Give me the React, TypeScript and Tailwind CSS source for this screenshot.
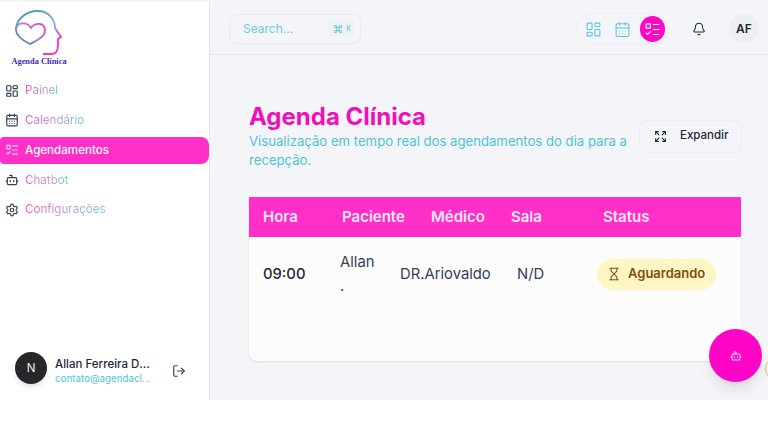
import { Bell, Bot, CalendarDays, Expand, Hourglass, LayoutDashboard, ListTodo, LogOut, Settings } from "lucide-react";
import type { LucideIcon } from "lucide-react";

type NavItem = { label: string; icon: LucideIcon; active?: boolean };

const navItems: NavItem[] = [
  { label: "Painel", icon: LayoutDashboard },
  { label: "Calendário", icon: CalendarDays },
  { label: "Agendamentos", icon: ListTodo, active: true },
  { label: "Chatbot", icon: Bot },
  { label: "Configurações", icon: Settings },
];

function Logo() {
  return (
    <div className="flex w-[56px] flex-col items-center">
      <svg width="50" height="47" viewBox="0 0 50 47" fill="none">
        <defs>
          <linearGradient id="head" x1="0" y1="0" x2="1" y2="1">
            <stop offset="0" stopColor="#2b8fa8" />
            <stop offset="0.55" stopColor="#7fb5d8" />
            <stop offset="0.8" stopColor="#ff2fc8" />
          </linearGradient>
          <linearGradient id="heart" x1="0" y1="1" x2="1" y2="0">
            <stop offset="0" stopColor="#1f7f99" />
            <stop offset="0.5" stopColor="#a58fd0" />
            <stop offset="1" stopColor="#ff2fc8" />
          </linearGradient>
        </defs>
        <path
          d="M2 21C2 10 12 2 24 2c10 0 17 8 17 17l6 9-3 2v6c0 6-2 9-6 9h-9"
          stroke="url(#head)"
          strokeWidth="1.800"
        />
        <path
          d="M17 19c3-5 14-7 14 3 0 6-9 10-15 13C8 31 2 27 2 21c0-8 11-9 15-2Z"
          stroke="url(#heart)"
          strokeWidth="1.800"
        />
      </svg>
      <span className="mt-[1px] whitespace-nowrap font-['Liberation_Serif',serif] text-[8.400px] leading-[10px] font-bold text-[#4a1fb8]">
        Agenda Clínica
      </span>
    </div>
  );
}

function Sidebar() {
  return (
    <aside className="flex h-full w-[210px] shrink-0 flex-col border-r border-[#e5e7eb] bg-white">
      <div className="h-[75px] pt-[7px] pl-[11px]">
        <Logo />
      </div>
      <nav className="flex flex-col gap-[2.750px]">
        {navItems.map((item) => {
          const Icon = item.icon;
          return (
            <div
              key={item.label}
              className={
                item.active
                  ? "flex h-[27px] w-[209px] items-center gap-[6px] rounded-r-lg rounded-l-sm bg-[#ff2fc8] pl-[5px] text-[#fbd5f1]"
                  : "flex h-[27px] items-center gap-[6px] pl-[5px] text-[#344054]"
              }
            >
              <Icon size={14} strokeWidth={2} />
              <span
                className={
                  item.active
                    ? "pt-[1px] text-[11.600px] font-medium text-white"
                    : "bg-gradient-to-r from-[#ec4fc4] to-[#6cc8e0] bg-clip-text pt-[1px] text-[11.600px] text-transparent"
                }
              >
                {item.label}
              </span>
            </div>
          );
        })}
      </nav>
      <div className="mt-auto flex items-start pb-[14px] pl-[15px]">
        <div className="flex h-[32px] w-[32px] shrink-0 items-center justify-center rounded-full bg-[#27272a] font-['Liberation_Sans',sans-serif] text-[12px] text-white shadow-md">
          N
        </div>
        <div className="mt-[4px] ml-[8px] w-[96px]">
          <p className="truncate text-[11.500px] leading-[16px] font-medium text-[#1d2939]">Allan Ferreira Dias</p>
          <p className="truncate text-[9.800px] leading-[14px] text-[#4fc3dc]">contato@agendaclinica.com</p>
        </div>
        <LogOut size={14} className="mt-[12px] ml-[21px] shrink-0 text-[#344054]" />
      </div>
    </aside>
  );
}

function Header() {
  return (
    <header className="flex h-[53px] shrink-0 items-center justify-between border-b border-[#e5e7eb] pt-[2px] pr-[9px] pl-[19px]">
      <div className="flex h-[30px] w-[132px] items-center justify-between rounded-lg border border-[#e9ebef] bg-[#f3f5f8] pr-[5px] pl-[13px]">
        <span className="text-[12px] text-[#76c9de]">Search...</span>
        <span className="flex items-center gap-[3px] rounded bg-[#eef1f5] px-[4px] py-[1px] text-[#5cc6de]">
          <span className="text-[11px] leading-[14px]">⌘</span>
          <span className="text-[7px] leading-[14px]">K</span>
        </span>
      </div>
      <div className="flex items-center">
        <div className="flex h-[32px] w-[93px] items-center gap-[2px] rounded-full border border-[#eceef2] pr-[3px] pl-[2px]">
          <span className="flex w-[30px] justify-center text-[#5cc6de]">
            <LayoutDashboard size={17} strokeWidth={1.5} />
          </span>
          <span className="flex w-[26px] justify-center text-[#5cc6de]">
            <CalendarDays size={17} strokeWidth={1.5} />
          </span>
          <span className="ml-[3px] flex h-[26px] w-[26px] items-center justify-center rounded-full bg-[#ff05c5] text-white">
            <ListTodo size={17} strokeWidth={1.6} />
          </span>
        </div>
        <Bell size={14} strokeWidth={1.8} className="ml-[23px] text-[#1d2939]" />
        <div className="ml-[23px] flex h-[30px] w-[30px] items-center justify-center rounded-full bg-[#eeeff2] text-[12px] font-semibold text-[#1d2939]">
          AF
        </div>
      </div>
    </header>
  );
}

function AppointmentsTable() {
  return (
    <div className="h-[164px] w-[492px] overflow-hidden rounded-b-lg bg-[#fcfcfd] shadow-[0_1px_2px_rgba(0,0,0,0.1)]">
      <div className="grid h-[40px] grid-cols-[79px_89px_80px_92px_1fr] items-center bg-[#ff2fc8] pl-[14px] text-[15px] font-semibold text-[#fbe9f7]">
        <span>Hora</span>
        <span>Paciente</span>
        <span>Médico</span>
        <span>Sala</span>
        <span>Status</span>
      </div>
      <div className="grid grid-cols-[77px_60px_117px_80px_1fr] items-center pt-[13px] pl-[14px] text-[14.800px] text-[#344054]">
        <span className="font-medium text-[#1d2939]">09:00</span>
        <span className="leading-[24px]">
          Allan
          <br />.
        </span>
        <span>DR.Ariovaldo</span>
        <span>N/D</span>
        <span className="flex h-[31px] w-[119px] items-center gap-[7px] rounded-full bg-[#fef6c3] pl-[10px] text-[13px] font-semibold text-[#854d0e]">
          <Hourglass size={14} strokeWidth={1.8} />
          Aguardando
        </span>
      </div>
    </div>
  );
}

export default function App() {
  return (
    <div className="relative h-[421px] w-[768px] overflow-hidden bg-white font-['Inter',sans-serif]">
      <div className="flex h-[400px] border-t-2 border-[#f3f4f6]">
        <Sidebar />
        <main className="flex min-w-0 flex-1 flex-col bg-[#f3f5f8]">
          <Header />
          <section className="pt-[47px] pl-[39px]">
            <div className="flex w-[493px] items-center justify-between">
              <div className="w-[385px]">
                <h1 className="text-[24px] leading-[30px] font-bold text-[#f00fb9]">Agenda Clínica</h1>
                <p className="text-[13.150px] leading-[19px] text-[#4fc3dc]">
                  Visualização em tempo real dos agendamentos do dia para a recepção.
                </p>
              </div>
              <button className="flex h-[33px] w-[103px] items-center gap-[13px] rounded-lg border border-[#eceef1] pl-[14px] text-[11.500px] font-medium text-[#1d2939]">
                <Expand size={13} strokeWidth={2} />
                Expandir
              </button>
            </div>
            <div className="mt-[27px]">
              <AppointmentsTable />
            </div>
          </section>
        </main>
      </div>
      <div className="absolute top-[357px] left-[765px] h-[24px] w-[24px] rounded-full border border-[#f5b95f]" />
      <button className="absolute top-[329px] left-[709px] flex h-[53px] w-[53px] items-center justify-center rounded-full bg-[#ff05c5] text-white shadow-lg">
        <Bot size={12} strokeWidth={1.6} />
      </button>
    </div>
  );
}
